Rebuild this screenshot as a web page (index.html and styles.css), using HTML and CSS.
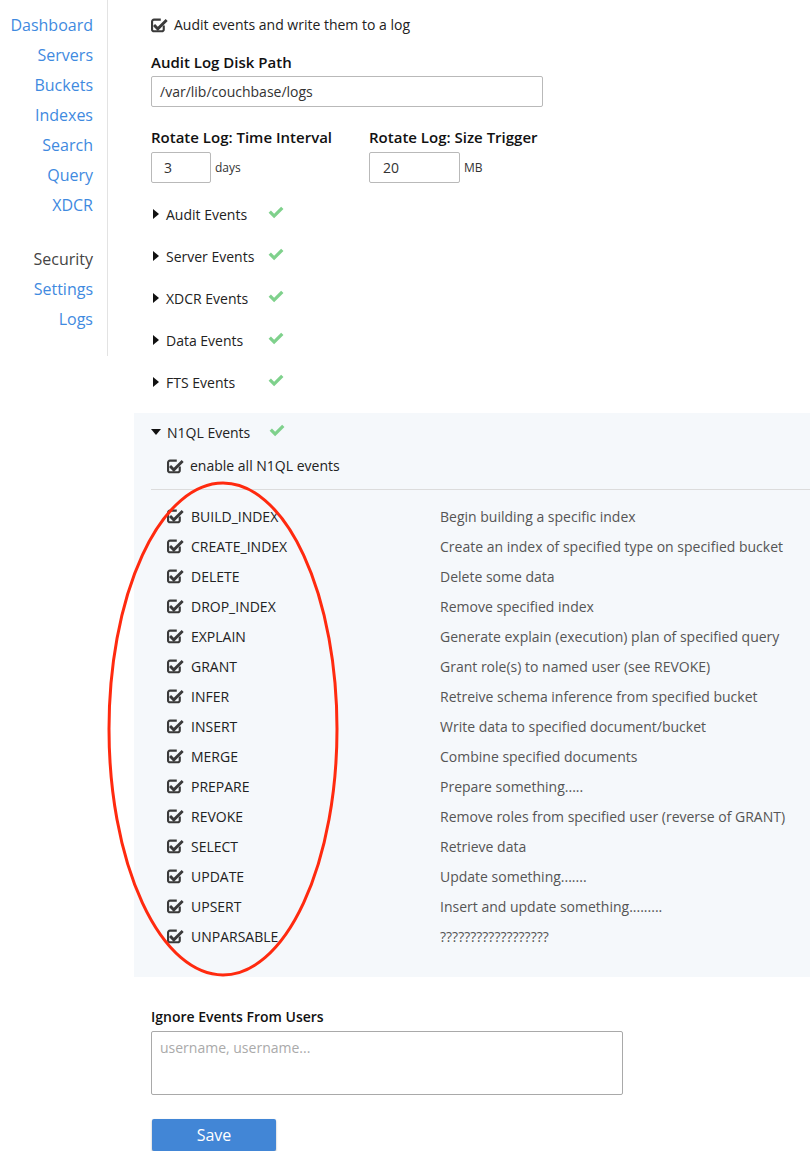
FILE: index.html
```html
<!DOCTYPE html>
<html>
<head>
<meta charset="utf-8">
<link rel="stylesheet" href="styles.css">
</head>
<body>
<svg width="0" height="0" class="defs">
  <defs>
    <symbol id="cb" viewBox="0 0 16 16">
      <path d="M12 9v3.6a1.8 1.8 0 0 1-1.8 1.8H2.8A1.8 1.8 0 0 1 1 12.6V5.2a1.8 1.8 0 0 1 1.8-1.8h6.4" fill="none" stroke="#3a3a3a" stroke-width="2"/>
      <path d="M3.8 7.6l2.6 2.6 7.4-7.4 1.9 1.9-9.3 9.3-4.5-4.5z" fill="#3a3a3a"/>
    </symbol>
    <symbol id="ok" viewBox="0 0 16 16">
      <path d="M1.5 8.3l2.2-2.2 3 3 6.6-6.6 2.2 2.2-8.8 8.8z" fill="#7fd18c"/>
    </symbol>
  </defs>
</svg>
<div class="page">
  <nav class="side">
    <a class="nav-link">Dashboard</a>
    <a class="nav-link">Servers</a>
    <a class="nav-link">Buckets</a>
    <a class="nav-link">Indexes</a>
    <a class="nav-link">Search</a>
    <a class="nav-link">Query</a>
    <a class="nav-link">XDCR</a>
    <a class="nav-link current gap">Security</a>
    <a class="nav-link">Settings</a>
    <a class="nav-link">Logs</a>
  </nav>
  <main class="main">
    <label class="check-line top-check"><svg class="cb"><use href="#cb"/></svg>Audit events and write them to a log</label>
    <div class="label path-label">Audit Log Disk Path</div>
    <div class="input path-input">/var/lib/couchbase/logs</div>
    <div class="rotate">
      <div class="rot-col">
        <div class="label">Rotate Log: Time Interval</div>
        <div class="with-unit"><div class="input small-input days-input">3</div><span class="unit">days</span></div>
      </div>
      <div class="rot-col">
        <div class="label">Rotate Log: Size Trigger</div>
        <div class="with-unit"><div class="input small-input mb-input">20</div><span class="unit">MB</span></div>
      </div>
    </div>
    <div class="groups">
      <div class="group"><span class="tri"></span><span class="gname">Audit Events</span><svg class="ok"><use href="#ok"/></svg></div>
      <div class="group"><span class="tri"></span><span class="gname">Server Events</span><svg class="ok"><use href="#ok"/></svg></div>
      <div class="group"><span class="tri"></span><span class="gname">XDCR Events</span><svg class="ok"><use href="#ok"/></svg></div>
      <div class="group"><span class="tri"></span><span class="gname">Data Events</span><svg class="ok"><use href="#ok"/></svg></div>
      <div class="group"><span class="tri"></span><span class="gname">FTS Events</span><svg class="ok"><use href="#ok"/></svg></div>
    </div>
    <section class="panel">
      <div class="group open-group"><span class="tri down"></span><span class="gname">N1QL Events</span><svg class="ok"><use href="#ok"/></svg></div>
      <label class="check-line enable-all"><svg class="cb"><use href="#cb"/></svg>enable all N1QL events</label>
      <div class="events">
        <div class="ev"><span class="ev-name"><svg class="cb"><use href="#cb"/></svg>BUILD_INDEX</span><span class="ev-desc">Begin building a specific index</span></div>
        <div class="ev"><span class="ev-name"><svg class="cb"><use href="#cb"/></svg>CREATE_INDEX</span><span class="ev-desc">Create an index of specified type on specified bucket</span></div>
        <div class="ev"><span class="ev-name"><svg class="cb"><use href="#cb"/></svg>DELETE</span><span class="ev-desc">Delete some data</span></div>
        <div class="ev"><span class="ev-name"><svg class="cb"><use href="#cb"/></svg>DROP_INDEX</span><span class="ev-desc">Remove specified index</span></div>
        <div class="ev"><span class="ev-name"><svg class="cb"><use href="#cb"/></svg>EXPLAIN</span><span class="ev-desc">Generate explain (execution) plan of specified query</span></div>
        <div class="ev"><span class="ev-name"><svg class="cb"><use href="#cb"/></svg>GRANT</span><span class="ev-desc">Grant role(s) to named user (see REVOKE)</span></div>
        <div class="ev"><span class="ev-name"><svg class="cb"><use href="#cb"/></svg>INFER</span><span class="ev-desc">Retreive schema inference from specified bucket</span></div>
        <div class="ev"><span class="ev-name"><svg class="cb"><use href="#cb"/></svg>INSERT</span><span class="ev-desc">Write data to specified document/bucket</span></div>
        <div class="ev"><span class="ev-name"><svg class="cb"><use href="#cb"/></svg>MERGE</span><span class="ev-desc">Combine specified documents</span></div>
        <div class="ev"><span class="ev-name"><svg class="cb"><use href="#cb"/></svg>PREPARE</span><span class="ev-desc">Prepare something.....</span></div>
        <div class="ev"><span class="ev-name"><svg class="cb"><use href="#cb"/></svg>REVOKE</span><span class="ev-desc">Remove roles from specified user (reverse of GRANT)</span></div>
        <div class="ev"><span class="ev-name"><svg class="cb"><use href="#cb"/></svg>SELECT</span><span class="ev-desc">Retrieve data</span></div>
        <div class="ev"><span class="ev-name"><svg class="cb"><use href="#cb"/></svg>UPDATE</span><span class="ev-desc">Update something.......</span></div>
        <div class="ev"><span class="ev-name"><svg class="cb"><use href="#cb"/></svg>UPSERT</span><span class="ev-desc">Insert and update something.........</span></div>
        <div class="ev"><span class="ev-name"><svg class="cb"><use href="#cb"/></svg>UNPARSABLE</span><span class="ev-desc">??????????????????</span></div>
      </div>
      <svg class="annot" width="236" height="500" viewBox="0 0 236 500"><ellipse cx="118" cy="250" rx="114" ry="246" fill="none" stroke="#ff2a0f" stroke-width="3"/></svg>
    </section>
    <div class="label ignore-label">Ignore Events From Users</div>
    <div class="textarea">username, username...</div>
    <button class="save">Save</button>
  </main>
</div>
</body>
</html>
```
FILE: styles.css
```css
* { box-sizing: border-box; }
html, body { margin: 0; padding: 0; background: #fff; }
body { font-family: "Open Sans", "Noto Sans", sans-serif; color: #222; font-size: 14px; }
.defs { position: absolute; }
.page { display: flex; align-items: flex-start; width: 810px; }
.side {
  width: 108px; flex: none; border-right: 1px solid #e3e3e3;
  display: flex; flex-direction: column; align-items: flex-end;
  padding: 10px 14px 22px 0; min-height: 355px;
}
.nav-link { font-size: 16px; line-height: 30px; color: #3f8ae0; }
.nav-link.current { color: #444; }
.nav-link.gap { margin-top: 24px; }
.main { flex: 1; padding: 15px 0 0 43px; }
.check-line { display: flex; align-items: center; line-height: 20px; }
.cb { width: 17px; height: 17px; margin-right: 6px; flex: none; margin-top: -2px; }
.label { font-weight: 600; font-size: 15px; line-height: 20px; color: #111; }
.path-label { margin-top: 17px; }
.input {
  border: 1px solid #b9b9b9; border-radius: 2px; height: 31px; line-height: 29px;
  padding: 0 8px; background: #fff; color: #333;
}
.path-input { width: 392px; margin-top: 4px; }
.rotate { display: flex; gap: 37px; margin-top: 20px; }
.with-unit { display: flex; align-items: center; margin-top: 5px; }
.small-input { padding-left: 12px; }
.days-input { width: 60px; }
.mb-input { width: 91px; padding-left: 13px; }
.unit { font-size: 12px; margin-left: 4px; color: #333; }
.groups { margin-top: 21px; display: flex; flex-direction: column; gap: 22px; }
.group { display: flex; align-items: center; height: 20px; }
.tri {
  width: 0; height: 0; border-top: 5px solid transparent; border-bottom: 5px solid transparent;
  border-left: 6px solid #111; margin: 0 7px 0 2px;
}
.tri.down { border-left: 5px solid transparent; border-right: 5px solid transparent; border-top: 6px solid #111; border-bottom: 0; margin: 0 6px 0 0; }
.gname { width: 101px; }
.ok { width: 17px; height: 17px; margin-top: -3px; }
.panel {
  position: relative; background: #f5f8fb; margin: 21px 0 0 -17px;
  padding: 9px 0 26px 17px;
}
.enable-all { margin: 14px 0 0 16px; }
.events { border-top: 1px solid #dcdcdc; margin-top: 13px; padding-top: 11px; }
.ev { display: flex; align-items: center; height: 30px; }
.ev-name { display: flex; align-items: center; width: 289px; padding-left: 16px; color: #222; }
.ev-name .cb { margin-right: 7px; }
.ev-desc { color: #555; }
.annot { position: absolute; left: -29px; top: 66px; pointer-events: none; }
.ignore-label { margin-top: 30px; font-size: 14px; }
.textarea {
  width: 472px; height: 64px; border: 1px solid #a9a9a9; border-radius: 2px; margin-top: 4px;
  padding: 6px 8px; color: #aaa;
}
.save {
  display: block; margin: 24px 0 0 1px; width: 124px; height: 32px; border: 0; border-radius: 2px;
  background: #4286d6; color: #fff; font-family: "Open Sans", sans-serif; font-size: 16px;
  box-shadow: 0 1px 2px rgba(0,0,0,0.35);
}
```
